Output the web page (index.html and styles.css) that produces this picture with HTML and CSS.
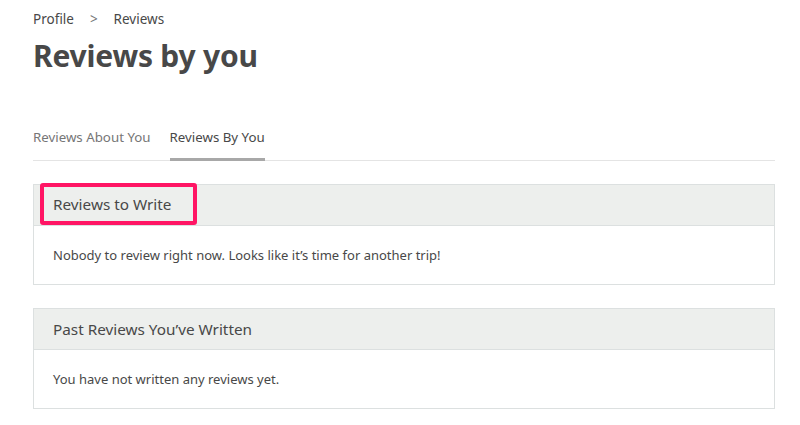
FILE: index.html
```html
<!DOCTYPE html>
<html lang="en">
    <head>
        <meta charset="UTF-8" />
        <title>Reviews by you</title>
        <link rel="stylesheet" href="styles.css">
    </head>
    <body>
        <div class="page">
            <div class="crumbs">
                <span>Profile</span>
                <span class="sep">&gt;</span>
                <span>Reviews</span>
            </div>
            <h1 class="title">Reviews by you</h1>

            <div class="tabs">
                <div class="tab">Reviews About You</div>
                <div class="tab active">Reviews By You</div>
            </div>

            <div class="card">
                <div class="card-head">
                    <span class="mark">Reviews to Write</span>
                </div>
                <div class="card-body">Nobody to review right now. Looks like it’s time for another trip!</div>
            </div>

            <div class="card">
                <div class="card-head">
                    <span>Past Reviews You’ve Written</span>
                </div>
                <div class="card-body">You have not written any reviews yet.</div>
            </div>
        </div>
    </body>
</html>
```

FILE: styles.css
```css
body {
    margin: 0;
    background: #fff;
    color: #484848;
    font-family: "Noto Sans", "Open Sans", sans-serif;
}
.page {
    padding: 10px 25px 0 33px;
    width: 742px;
}
.crumbs {
    display: flex;
    gap: 16px;
    font-size: 13.5px;
    line-height: 18px;
    color: #484848;
}
.crumbs .sep { color: #767676; }
.title {
    margin: 6px 0 0 0;
    font-size: 30px;
    line-height: 44px;
    font-weight: bold;
    color: #484848;
    letter-spacing: -0.2px;
}
.tabs {
    display: flex;
    gap: 19px;
    margin-top: 49px;
    border-bottom: 1px solid #e4e4e4;
}
.tab {
    font-size: 13.3px;
    line-height: 20px;
    padding-bottom: 11px;
    color: #767676;
    border-bottom: 3px solid transparent;
    margin-bottom: -1px;
}
.tab.active {
    color: #484848;
    border-bottom-color: #a8a8a8;
}
.card {
    border: 1px solid #dce0e0;
    margin-top: 23px;
}
.card-head {
    background: #edefed;
    border-bottom: 1px solid #dce0e0;
    height: 40px;
    display: flex;
    align-items: center;
    padding-left: 19px;
    font-size: 15.3px;
    color: #484848;
}
.mark {
    margin-left: -13px;
    padding: 7px 22px 7px 9px;
    border: 4px solid #ff1564;
    border-radius: 3px;
    margin-top: -2px;
}
.card-body {
    height: 58px;
    display: flex;
    align-items: center;
    padding-left: 19px;
    font-size: 13px;
    color: #484848;
}
```
